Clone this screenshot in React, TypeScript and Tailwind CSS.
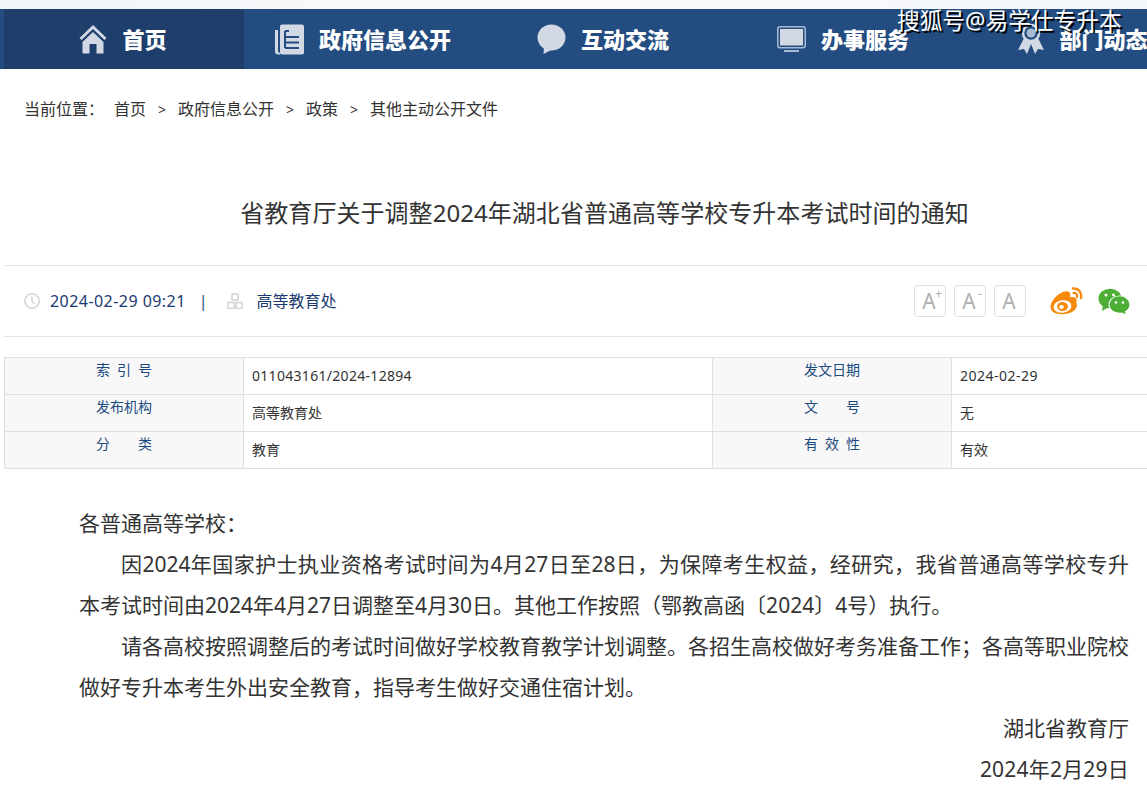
import React from "react";

const Home = () => (
  <svg width="28" height="30" viewBox="0 0 28 30" fill="#d2d9e4">
    <path d="M14 1 L0.5 14 L2.5 16 L14 5 L25.5 16 L27.5 14 Z" />
    <path d="M14 8 L3.5 18 V29.5 H10.5 V20 H17.5 V29.5 H24.5 V18 Z" />
  </svg>
);
const Doc = () => (
  <svg width="29" height="31" viewBox="0 0 29 31">
    <rect x="5" y="0.5" width="24" height="30" rx="2" fill="#d2d9e4" />
    <path d="M0 6 H3 V27 Q3 28.5 5 29 V30.5 H3 Q0 30.5 0 27.5 Z" fill="#d2d9e4" />
    <path d="M10 7 H14 M10 13 H24 M10 18.5 H24 M10 24 H24" stroke="#234c80" strokeWidth="2" />
    <path d="M10 7 V24" stroke="#234c80" strokeWidth="2" />
  </svg>
);
const Bubble = () => (
  <svg width="29" height="30" viewBox="0 0 29 30" fill="#d2d9e4">
    <ellipse cx="14.5" cy="13.5" rx="14" ry="13" />
    <path d="M7 23 L6.5 30 L16 25 Z" />
  </svg>
);
const Screen = () => (
  <svg width="29" height="26" viewBox="0 0 29 26">
    <rect x="0.75" y="0.75" width="27.5" height="21" rx="2.5" fill="none" stroke="#a9bbd3" strokeWidth="1.5" />
    <rect x="3" y="3" width="23" height="16.5" fill="#d2d9e4" />
    <rect x="7" y="24" width="15" height="2" fill="#a9bbd3" />
  </svg>
);
const Medal = () => (
  <svg width="26" height="30" viewBox="0 0 26 30">
    <path d="M6 14 L0 26 L6 25 L9 30 L13 20 L17 30 L20 25 L26 26 L20 14 Z" fill="#d2d9e4" />
    <circle cx="13" cy="9" r="8" fill="#234c80" stroke="#d2d9e4" strokeWidth="2.5" />
    <circle cx="13" cy="9" r="4.5" fill="#a9bbd3" />
  </svg>
);
const Weibo = () => (
  <svg width="33" height="28" viewBox="0 0 33 28" className="ml-6">
    <path
      d="M4 12 C8 7 14 3.5 18 4.5 C21 5.5 20.5 8.5 20 10.5 C23 9.5 26 10 26.5 12.5 C27 14 26.5 15 26 16 C28 17 27 23 21 25.5 C15 28 6 28 2.5 24.5 C-1 21 0.5 16 4 12 Z"
      fill="#f78a0b"
    />
    <ellipse cx="12.5" cy="19.5" rx="9" ry="6.3" fill="#fff" transform="rotate(-8 12.5 19.5)" />
    <ellipse cx="12.5" cy="19.5" rx="5.4" ry="4.6" fill="#f78a0b" />
    <ellipse cx="11.5" cy="20" rx="2.3" ry="1.9" fill="#fff" />
    <path d="M23 1.5 C28.5 1 32 5.5 31 11" fill="none" stroke="#f78a0b" strokeWidth="2.4" strokeLinecap="round" />
    <path d="M23.5 6 C26 5.6 27.6 7.6 27 10" fill="none" stroke="#f78a0b" strokeWidth="2.2" strokeLinecap="round" />
  </svg>
);
const Wechat = () => (
  <svg width="32" height="26" viewBox="0 0 32 26" className="ml-[15px]">
    <ellipse cx="12" cy="10.5" rx="11.5" ry="9.8" fill="#4cae35" />
    <path d="M5 17 L4 23 L11 19 Z" fill="#4cae35" />
    <ellipse cx="21.5" cy="16.5" rx="11" ry="9" fill="#fff" />
    <ellipse cx="21.5" cy="16.5" rx="10" ry="8.3" fill="#4cae35" />
    <path d="M26 22 L28 26 L22 24 Z" fill="#4cae35" />
    <circle cx="8" cy="7" r="1.5" fill="#fff" />
    <circle cx="15.5" cy="7" r="1.5" fill="#fff" />
    <circle cx="18" cy="14.5" r="1.3" fill="#fff" />
    <circle cx="25" cy="14.5" r="1.3" fill="#fff" />
  </svg>
);

const navItems: [React.ReactNode, string, boolean][] = [
  [<Home />, "首页", true],
  [<Doc />, "政府信息公开", false],
  [<Bubble />, "互动交流", false],
  [<Screen />, "办事服务", false],
  [<Medal />, "部门动态", false],
];

const rows = [
  ["索 引 号", "011043161/2024-12894", "发文日期", "2024-02-29"],
  ["发布机构", "高等教育处", "文\u3000\u3000号", "无"],
  ["分\u3000\u3000类", "教育", "有 效 性", "有效"],
];

const FontBtn = ({ sup }: { sup?: string }) => (
  <div className="relative flex h-8 w-8 items-center justify-center rounded-[3px] border border-[#e0e0e0] pr-[2px] text-[21px] leading-none text-[#b0b0b0]">
    A
    {sup && <span className="absolute right-[3px] top-[2px] text-[12px] leading-none">{sup}</span>}
  </div>
);

const Sep = () => <span className="w-8 text-center text-[14px]">&gt;</span>;

export default function App() {
  return (
    <div className="relative h-[801px] w-[1147px] overflow-hidden bg-white font-['Noto_Sans','Noto_Sans_CJK_SC',sans-serif] text-[#333]">
      <div className="h-[9px] bg-gradient-to-r from-[#f2f5f8] via-[#fafbfc] to-[#f3f6fa]" />
      <nav className="flex h-[60px] bg-[#234c80] pl-1">
        {navItems.map(([icon, label, active]) => (
          <div
            key={label}
            className={`flex h-full w-[240px] shrink-0 items-center justify-center gap-[15px] pr-[2px] text-[22px] font-black whitespace-nowrap text-white ${active ? "bg-[#1e3f6c]" : ""}`}
          >
            {icon}
            <span>{label}</span>
          </div>
        ))}
      </nav>
      <div className="absolute left-[897px] top-[6px] whitespace-nowrap text-[22.7px] leading-[30px] text-white [text-shadow:2px_2px_0_#000]">
        搜狐号@易学仕专升本
      </div>

      <div className="flex h-20 items-center pl-6 text-[16px] text-[#333]">
        <span className="w-[90px]">当前位置：</span>
        <span>首页</span>
        <Sep />
        <span>政府信息公开</span>
        <Sep />
        <span>政策</span>
        <Sep />
        <span>其他主动公开文件</span>
      </div>

      <h1 className="ml-[62px] flex h-[116px] items-center justify-center pt-3 text-[24px] font-normal tracking-[0.05px] text-[#333]">
        省教育厅关于调整2024年湖北省普通高等学校专升本考试时间的通知
      </h1>

      <div className="ml-1 flex h-[72px] items-center border-y border-[#e2e2e2] pl-5 pr-[17px] text-[16px] text-[#1a3a70]">
        <svg width="16" height="16" viewBox="0 0 16 16" fill="none" stroke="#d2d2d2" strokeWidth="1.5" className="mr-[10px]">
          <circle cx="8" cy="8" r="7.2" />
          <path d="M8 3.5 V8 L10.5 11" />
        </svg>
        <span className="tracking-[0.45px]">2024-02-29 09:21</span>
        <span className="ml-[13px] mr-[19px] text-[#234c80]">|</span>
        <svg width="16" height="16" viewBox="0 0 16 16" fill="none" stroke="#d2d2d2" strokeWidth="1.5" className="mr-[14px]">
          <rect x="5" y="1" width="6" height="6" />
          <rect x="1" y="9.5" width="6" height="6" />
          <rect x="9" y="9.5" width="6" height="6" />
        </svg>
        <span>高等教育处</span>
        <div className="ml-auto flex items-center">
          <div className="flex gap-2">
            <FontBtn sup="+" />
            <FontBtn sup="-" />
            <FontBtn />
          </div>
          <Weibo />
          <Wechat />
        </div>
      </div>

      <div className="ml-1 mt-5 grid w-[1180px] grid-cols-[239px_469px_239px_1fr] border-t border-l border-[#e0e0e0] text-[14px]">
        {rows.map((r) =>
          r.map((c, i) => (
            <div
              key={c + i}
              className={`h-[37px] border-b border-r border-[#e0e0e0] ${i % 2 === 0 ? "bg-[#f8f8f8] pl-[91px] pt-[1px] leading-[22px] text-[#1a4a80]" : "pl-2 pt-[7px] leading-[22px] text-[#333]"} whitespace-pre`}
            >
              <span className={i % 2 === 0 ? "[word-spacing:3.4px]" : c.length > 10 ? "tracking-[0.3px]" : /\d/.test(c) ? "tracking-[0.5px]" : ""}>{c}</span>
            </div>
          ))
        )}
      </div>

      <div className="ml-[79px] mt-[34px] w-[1050px] text-[21px] leading-[41px] text-[#333]">
        <p>各普通高等学校：</p>
        <p className="indent-[42px] text-justify">
          因2024年国家护士执业资格考试时间为4月27日至28日，为保障考生权益，经研究，我省普通高等学校专升本考试时间由2024年4月27日调整至4月30日。其他工作按照（鄂教高函〔2024〕4号）执行。
        </p>
        <p className="indent-[42px] text-justify">
          请各高校按照调整后的考试时间做好学校教育教学计划调整。各招生高校做好考务准备工作；各高等职业院校做好专升本考生外出安全教育，指导考生做好交通住宿计划。
        </p>
        <p className="text-right">湖北省教育厅</p>
        <p className="text-right tracking-[0.2px]">2024年2月29日</p>
      </div>
    </div>
  );
}
